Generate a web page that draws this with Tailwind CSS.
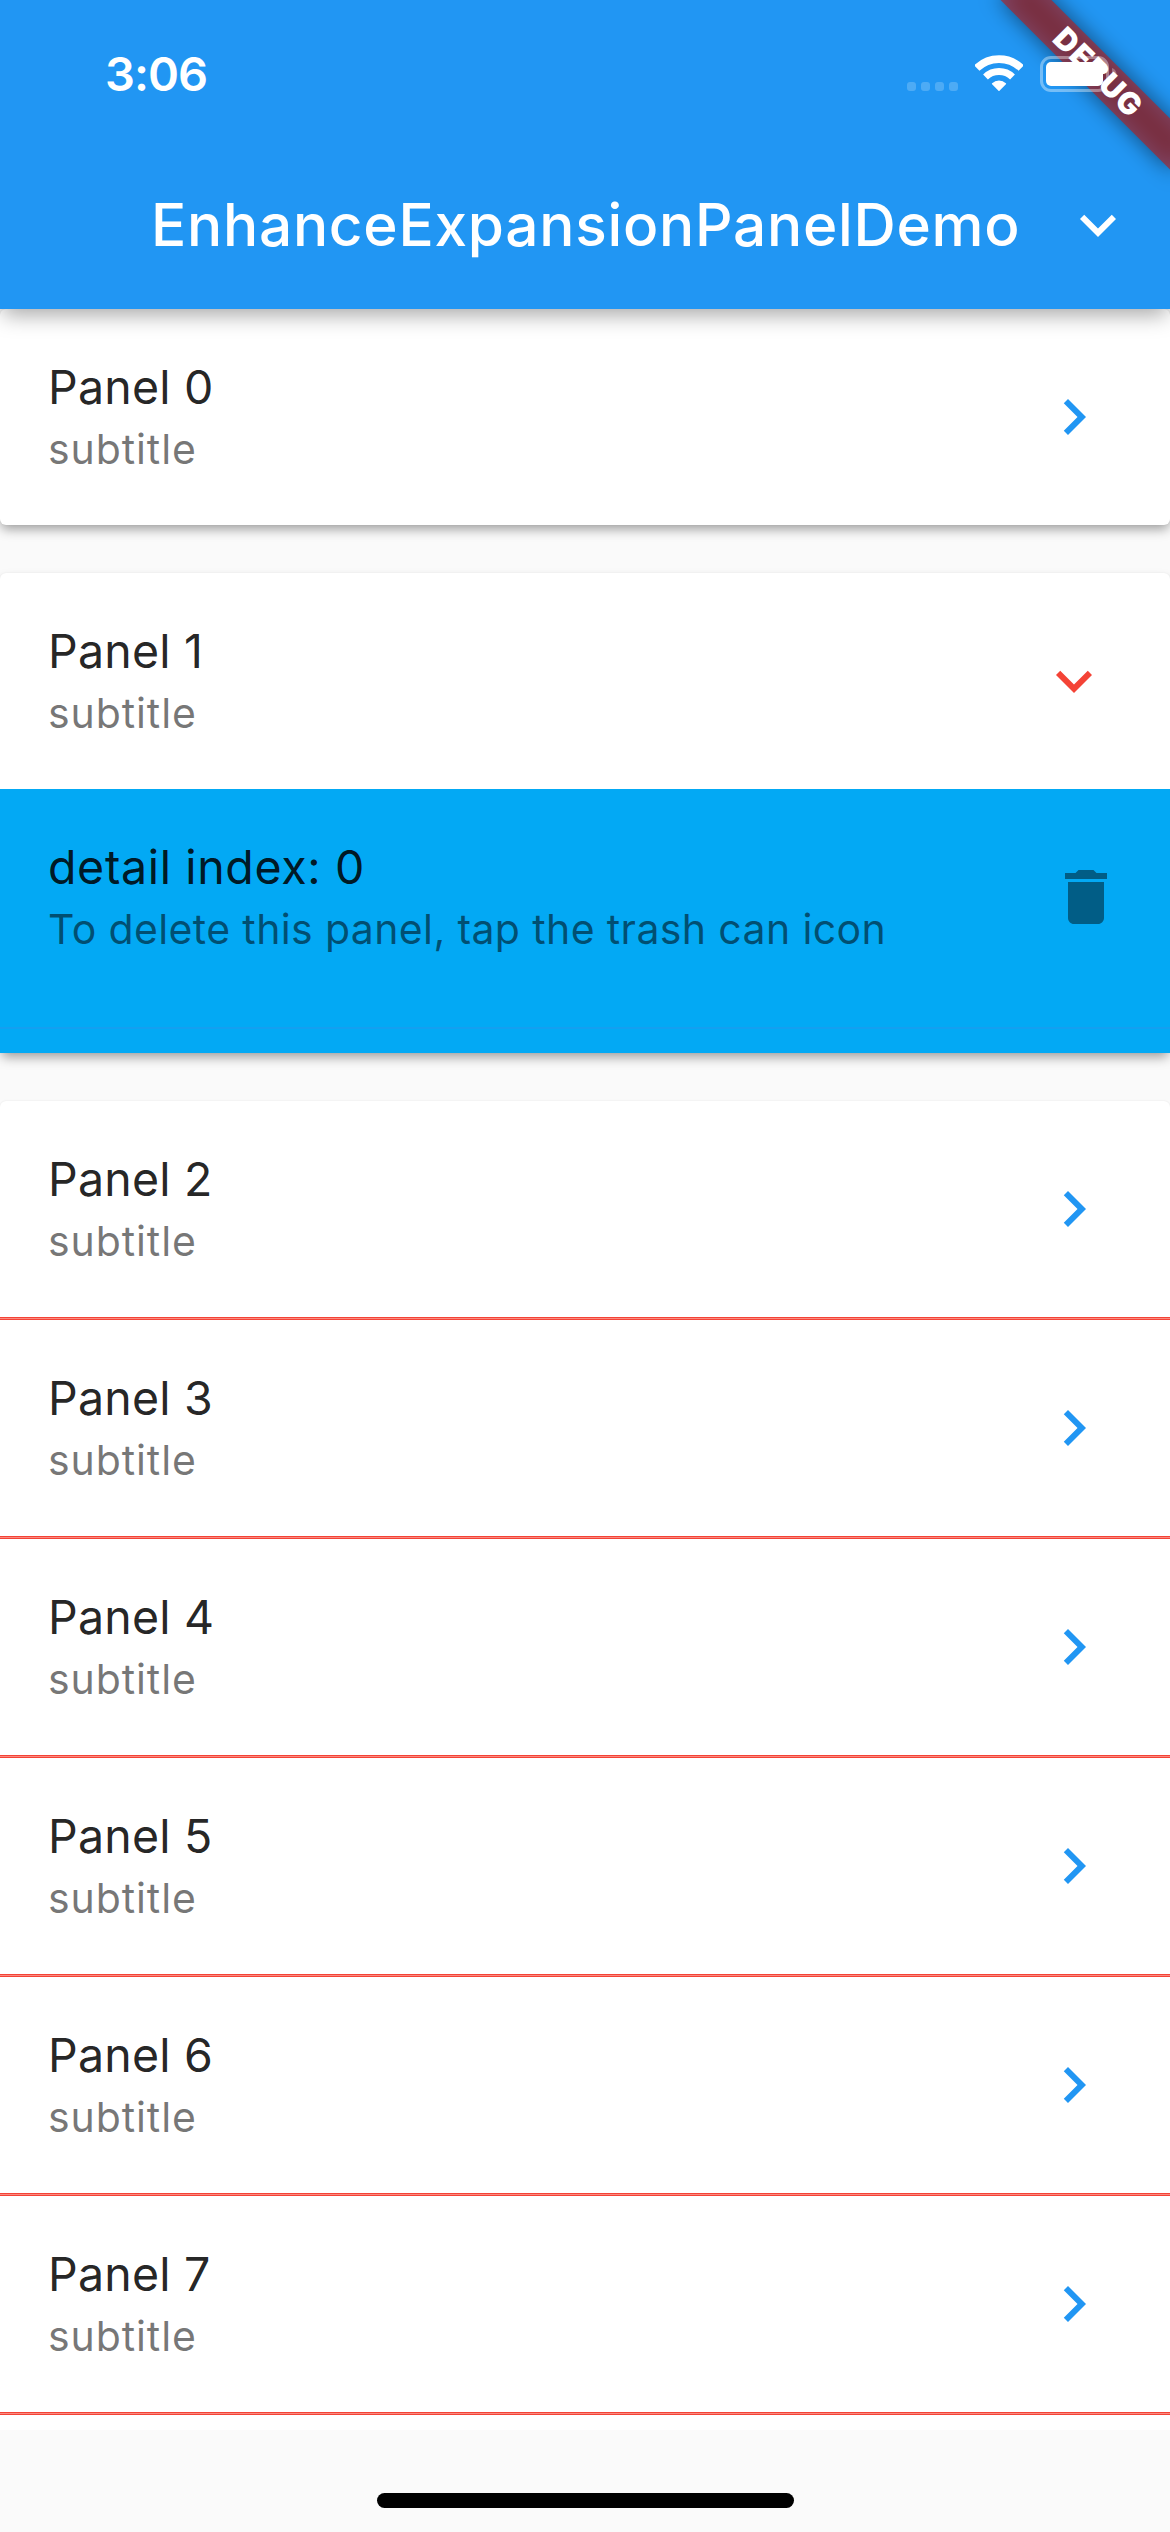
<!DOCTYPE html>
<html lang="en">
<head>
<meta charset="utf-8">
<title>EnhanceExpansionPanelDemo</title>
<script src="https://cdn.jsdelivr.net/npm/@tailwindcss/browser@4"></script>
</head>
<body class="bg-[#fafafa] font-[Inter,sans-serif]">
<svg class="hidden">
  <symbol id="expand" viewBox="0 0 24 24"><path d="M16.59 8.59L12 13.17 7.41 8.59 6 10l6 6 6-6z"/></symbol>
  <symbol id="trash" viewBox="0 0 24 24"><path d="M6 19c0 1.1.9 2 2 2h8c1.1 0 2-.9 2-2V7H6v12zM19 4h-3.5l-1-1h-5l-1 1H5v2h14V4z"/></symbol>
</svg>
<div class="relative flex h-[2532px] w-[1170px] flex-col overflow-hidden">
  <header class="relative z-10 flex h-[309px] shrink-0 flex-col bg-[#2196f3] text-white shadow-[0_9px_20px_-3px_rgba(0,0,0,0.34)]">
    <!-- debug ribbon -->
    <svg class="absolute top-0 right-0" width="270" height="270" viewBox="0 0 270 270">
      <defs><filter id="soft" x="-30%" y="-150%" width="160%" height="400%"><feGaussianBlur stdDeviation="11"/></filter></defs>
      <g transform="translate(198 72) rotate(45)">
        <rect x="-120" y="-18" width="240" height="36" fill="#000" fill-opacity=".5" filter="url(#soft)"/>
        <rect x="-160" y="-18" width="320" height="36" fill="#b71c1c" fill-opacity=".627"/>
        <text x="0.5" y="11" text-anchor="middle" font-family="Inter" font-weight="900" font-size="30.6" letter-spacing="1.1" fill="#fff">DEBUG</text>
      </g>
    </svg>
    <div class="relative flex h-[141px] items-start justify-between pt-[46px] pr-[53px] pl-[105px]">
      <span class="text-[47px] leading-[56px] font-semibold tracking-[-1px]">3:06</span>
      <div class="flex h-[56px] items-center">
        <div class="mt-[25px] mr-[17px] flex gap-[5px]">
          <i class="size-[9px] rounded-[3px] bg-white/20"></i>
          <i class="size-[9px] rounded-[3px] bg-white/20"></i>
          <i class="size-[9px] rounded-[3px] bg-white/20"></i>
          <i class="size-[9px] rounded-[3px] bg-white/20"></i>
        </div>
        <svg class="mr-[17px] mb-[2px]" width="48" height="36" viewBox="0 0 48 36" fill="none" stroke="#fff">
          <path d="M1.800 13.1A31.9 31.9 0 0 1 46.2 13.1" stroke-width="7.6"/>
          <path d="M10.5 22A19.4 19.4 0 0 1 37.5 22" stroke-width="6.9"/>
          <path d="M24 35.2L17.6 28.7A9.6 9.6 0 0 1 30.4 28.7Z" fill="#fff" stroke-width="1.4" stroke-linejoin="round"/>
        </svg>
        <svg width="77" height="36" viewBox="0 0 77 36">
          <rect x="1.5" y="1.5" width="66" height="33" rx="9.5" fill="none" stroke="#fff" stroke-opacity=".38" stroke-width="3"/>
          <rect x="6" y="6" width="57" height="24" rx="5" fill="#fff"/>
          <path d="M72 12c3 1.2 4.5 3.4 4.5 6s-1.5 4.8-4.5 6z" fill="#fff" fill-opacity=".3"/>
        </svg>
      </div>
    </div>
    <div class="relative flex h-[168px] items-center justify-between pr-[36px] pl-[151px]">
      <h1 class="text-[58.5px] leading-[70px] font-medium tracking-[0.75px]">EnhanceExpansionPanelDemo</h1>
      <svg class="size-[72px] fill-white"><use href="#expand"/></svg>
    </div>
  </header>

  <main class="flex h-[2121px] shrink-0 flex-col gap-[48px] overflow-hidden">
    <section class="rounded-[6px] bg-white shadow-[0_5px_12px_-1px_rgba(0,0,0,0.38),0_0_2px_rgba(0,0,0,0.06)]" data-rows="0"></section>
    <section class="rounded-t-[6px] bg-white shadow-[0_6px_12px_-2px_rgba(0,0,0,0.38),0_0_2px_rgba(0,0,0,0.06)]">
      <div class="flex h-[216px] items-center justify-between pr-[60px] pl-[48px]">
        <div class="pt-[8px]">
          <p class="text-[46.5px] leading-[56px] tracking-[0.2px] text-black/87">Panel 1</p>
          <p class="text-[41px] leading-[68px] tracking-[0.9px] text-black/54">subtitle</p>
        </div>
        <svg class="size-[72px] fill-[#f44336]"><use href="#expand"/></svg>
      </div>
      <div class="flex h-[264px] flex-col bg-[#03a9f4]">
        <div class="flex h-[216px] items-center justify-between pr-[48px] pl-[48px]">
          <div class="pt-[8px]">
            <p class="text-[46.5px] leading-[56px] tracking-[0.65px] text-black/87">detail index: 0</p>
            <p class="text-[41px] leading-[68px] tracking-[0.37px] text-black/54">To delete this panel, tap the trash can icon</p>
          </div>
          <svg class="size-[72px] fill-black/45"><use href="#trash"/></svg>
        </div>
        <div class="mt-[22px] h-[2px] bg-[#149ff0]"></div>
      </div>
    </section>
    <section class="rounded-t-[6px] bg-white pb-[20px] shadow-[0_0_2px_rgba(0,0,0,0.1)]" data-rows="2,3,4,5,6,7"></section>
  </main>

  <div class="mt-[63px] ml-[377px] h-[15px] w-[417px] rounded-full bg-black"></div>
</div>
<script>
for (const section of document.querySelectorAll('[data-rows]')) {
  const rows = section.dataset.rows.split(',');
  section.innerHTML = rows.map(n => `
    <div class="flex h-[216px] items-center justify-between pr-[60px] pl-[48px]">
      <div class="pt-[8px]">
        <p class="text-[46.5px] leading-[56px] tracking-[0.2px] text-black/87">Panel ${n}</p>
        <p class="text-[41px] leading-[68px] tracking-[0.9px] text-black/54">subtitle</p>
      </div>
      <svg class="size-[72px] -rotate-90 fill-[#2196f3]"><use href="#expand"/></svg>
    </div>` + (rows.length > 1 ? '<div class="h-[3px] border-y border-[#f44336] bg-[#fa8a80]"></div>' : '')).join('');
}
</script>
</body>
</html>
